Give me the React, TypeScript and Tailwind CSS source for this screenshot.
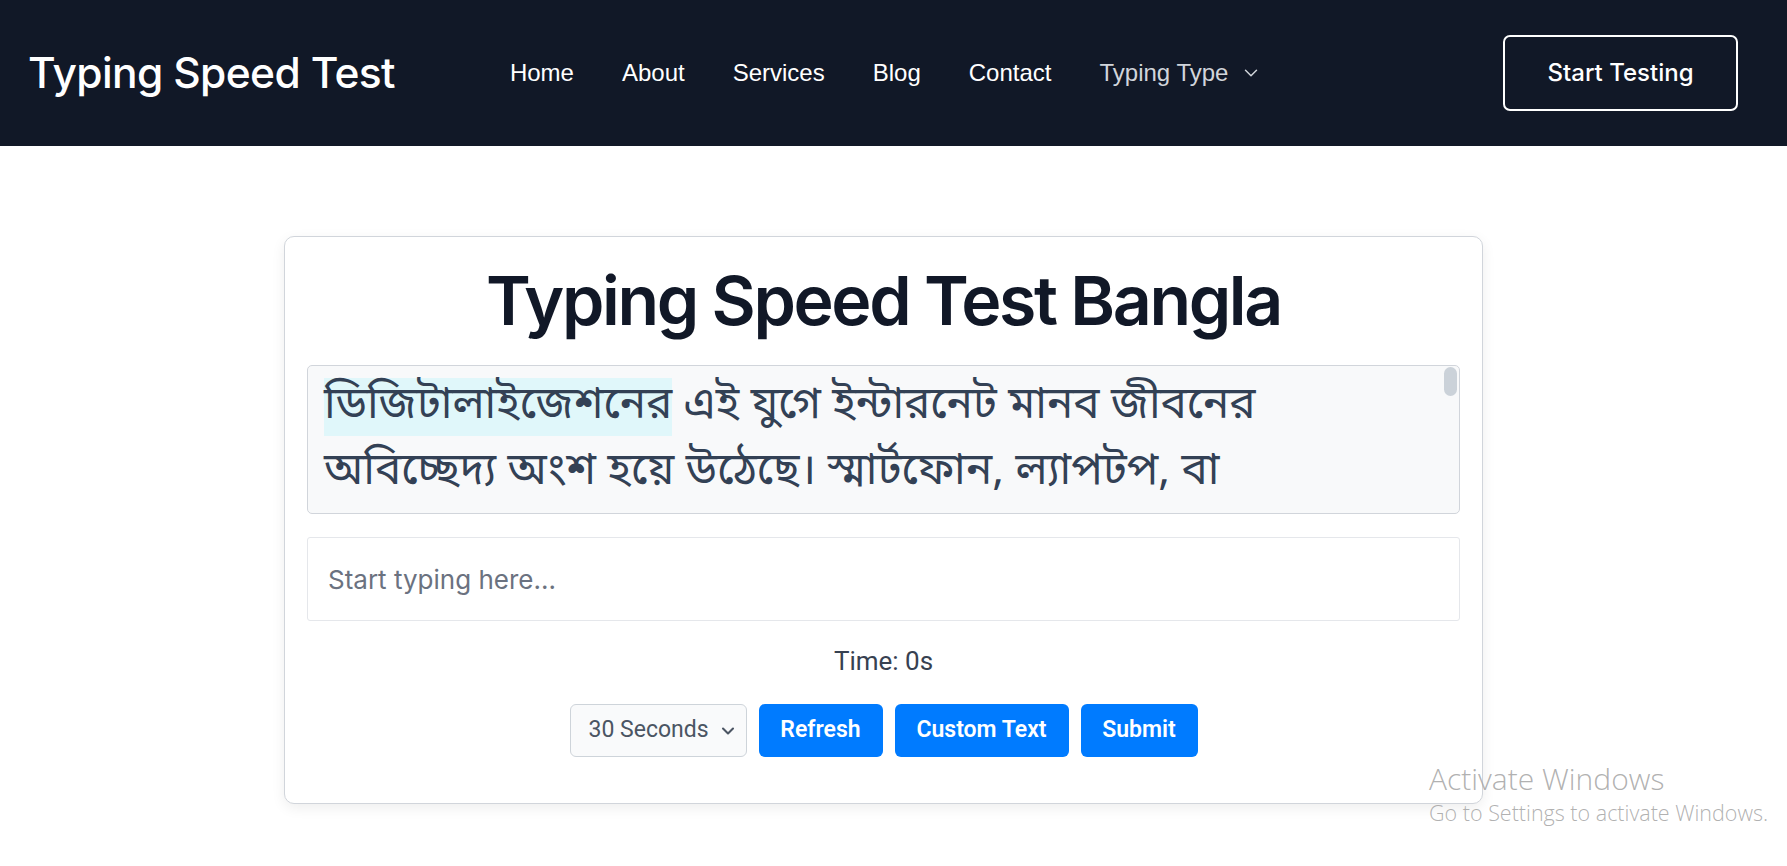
import { ChevronDown } from "lucide-react";

const navLinks = ["Home", "About", "Services", "Blog", "Contact"];

const firstWord = "ডিজিটালাইজেশনের";
const line1Rest = " এই যুগে ইন্টারনেট মানব জীবনের";
const line2 = "অবিচ্ছেদ্য অংশ হয়ে উঠেছে। স্মার্টফোন, ল্যাপটপ, বা";

function Header() {
  return (
    <header className="h-[146px] bg-[#111827] flex items-center pl-[28px] pr-[49px]">
      <a className="text-white text-[42.5px] font-medium tracking-[-0.015em] font-['Inter',sans-serif]">
        Typing Speed Test
      </a>
      <nav className="flex items-center gap-[48px] ml-[115px] font-['Liberation_Sans',Arial,sans-serif] text-[24px]">
        {navLinks.map((l) => (
          <a key={l} className="text-white">
            {l}
          </a>
        ))}
        <button className="flex items-center gap-[12px] text-[#d1d5db]">
          Typing Type
          <ChevronDown size={22} strokeWidth={1.6} />
        </button>
      </nav>
      <button className="ml-auto w-[235px] h-[76px] rounded-[7px] border-2 border-white text-white text-[24px] font-medium font-['Inter',sans-serif]">
        Start Testing
      </button>
    </header>
  );
}

function TypingCard() {
  return (
    <div className="w-[1199px] ml-[284px] mt-[90px] rounded-[10px] border border-[#d1d5db] bg-white shadow-[0_4px_14px_rgba(0,0,0,0.07)] px-[22px] pt-[22px] pb-[46px]">
      <h1 className="text-center text-[#111827] text-[68px] leading-[82px] font-semibold tracking-[-0.035em] font-['Inter',sans-serif]">
        Typing Speed Test Bangla
      </h1>

      {/* passage */}
      <div className="relative mt-[24px] h-[149px] overflow-hidden rounded-[5px] border border-[#d1d5db] bg-[#f8f9fa] pl-[16px] pr-[18px] pt-[8px]">
        <p className="text-[44px] leading-[66px] text-[#334155] whitespace-nowrap font-['Noto_Sans_Bengali','Noto_Sans',sans-serif]">
          <span className="bg-[#e0f7fa]">{firstWord}</span>
          {line1Rest}
          <br />
          {line2}
        </p>
        <div className="absolute right-[2px] top-[1px] w-[13px] h-[29px] rounded-full bg-[#cbd2d9]"></div>
      </div>

      {/* input */}
      <input
        type="text"
        placeholder="Start typing here..."
        className="mt-[23px] w-full h-[84px] border border-[#e5e7eb] rounded-[3px] px-[20px] text-[26px] text-[#374151] placeholder:text-[#6b7280] font-['Inter',sans-serif] outline-none"
      />

      <p className="mt-[25px] text-center text-[26px] leading-[30px] text-[#374151] font-['Roboto',sans-serif]">
        Time: 0s
      </p>

      <div className="mt-[28px] flex items-center justify-center gap-[12px] font-['Roboto',sans-serif]">
        <div className="w-[177px] h-[53px] flex items-center justify-between pl-[18px] pr-[8px] border border-[#ced4da] rounded-[6px] bg-[#f9fafb] text-[23px] text-[#4b5563]">
          <span>30 Seconds</span>
          <ChevronDown size={20} strokeWidth={2.5} className="text-[#4b5563]" />
        </div>
        <button className="w-[124px] h-[53px] rounded-[6px] bg-[#007bff] text-white text-[23px] font-semibold">
          Refresh
        </button>
        <button className="w-[174px] h-[53px] rounded-[6px] bg-[#007bff] text-white text-[23px] font-semibold">
          Custom Text
        </button>
        <button className="w-[117px] h-[53px] rounded-[6px] bg-[#007bff] text-white text-[23px] font-semibold">
          Submit
        </button>
      </div>
    </div>
  );
}

export default function App() {
  return (
    <div className="relative min-h-[866px] bg-white">
      <Header />
      <TypingCard />
      {/* windows watermark */}
      <div className="absolute left-[1429px] top-[760px] text-[#a3a3a3]/85 font-['Open_Sans','Noto_Sans',sans-serif] leading-tight pointer-events-none">
        <p className="text-[30px] font-light">Activate Windows</p>
        <p className="text-[21.5px] font-light mt-[2px]">Go to Settings to activate Windows.</p>
      </div>
    </div>
  );
}
